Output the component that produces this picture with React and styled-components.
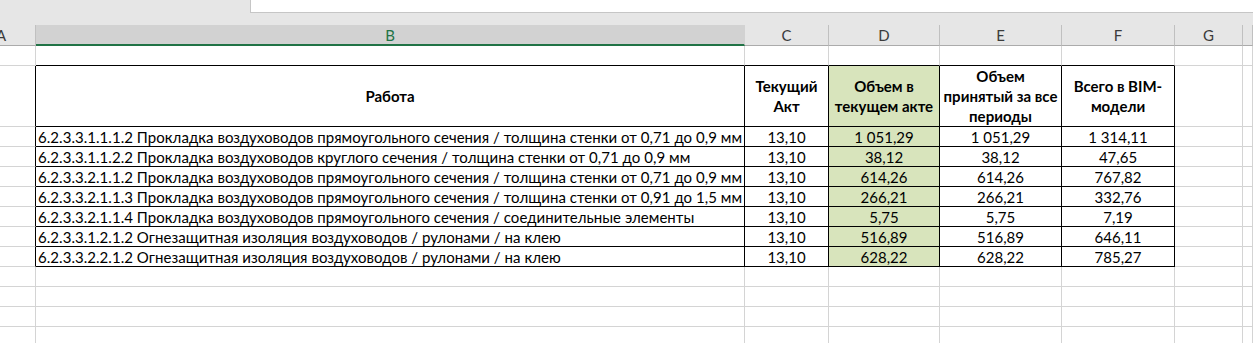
import React from "react";
import styled, { createGlobalStyle } from "styled-components";

const GlobalStyle = createGlobalStyle`
  html, body { margin: 0; padding: 0; background: #ffffff; }
  body {
    font-family: Lato, "Open Sans", "Noto Sans", sans-serif;
    font-size: 15px;
    color: #000;
    overflow: hidden;
  }
`;

const COLS = "36px 709px 84px 111px 122px 113px 68px 1fr";

const Page = styled.div`
  width: 1253px;
  height: 343px;
  overflow: hidden;
`;

const TopBar = styled.div`
  height: 25px;
  background: #e6e6e6;
  display: flex;
`;

const FormulaBox = styled.div`
  margin-left: 250px;
  flex: 1;
  height: 13px;
  box-sizing: border-box;
  background: #ffffff;
  border-left: 1px solid #c6c6c6;
  border-bottom: 1px solid #c6c6c6;
`;

const Row = styled.div`
  display: grid;
  grid-template-columns: ${COLS};
  height: ${(p) => p.$h}px;
`;

const ColHead = styled.div`
  box-sizing: border-box;
  background: ${(p) => (p.$selected ? "#d2d2d2" : "#e6e6e6")};
  border-right: 1px solid ${(p) => (p.$selected ? "#d2d2d2" : "#c0c0c0")};
  border-bottom: ${(p) => (p.$selected ? "2px solid #217346" : "1px solid #ababab")};
  color: ${(p) => (p.$selected ? "#217346" : "#3b3b3b")};
  display: flex;
  align-items: center;
  justify-content: ${(p) => (p.$edge ? "flex-start" : "center")};
  font-size: 15px;
  line-height: 20px;
  padding-top: ${(p) => (p.$selected ? "1px" : "0")};
  overflow: hidden;
`;

const EdgeLetter = styled.span`
  margin-left: -4px;
`;

const Cell = styled.div`
  box-sizing: border-box;
  background: ${(p) => p.$bg || "#ffffff"};
  border-right: 1px solid ${(p) => p.$r || "#d4d4d4"};
  border-bottom: 1px solid ${(p) => p.$b || "#d4d4d4"};
  display: flex;
  align-items: center;
  justify-content: ${(p) => (p.$left ? "flex-start" : "center")};
  text-align: ${(p) => (p.$left ? "left" : "center")};
  padding: ${(p) => (p.$left ? "0 0 0 2px" : "0 2px")};
  font-weight: ${(p) => (p.$bold ? 700 : 400)};
  letter-spacing: ${(p) => (p.$left ? "0.04px" : "0")};
  line-height: 20px;
  white-space: ${(p) => (p.$wrap ? "normal" : "nowrap")};
  overflow: hidden;
`;

const GREEN = "#d8e4bc";
const BLACK = "#000000";

const data = [
  ["6.2.3.3.1.1.1.2 Прокладка воздуховодов прямоугольного сечения / толщина стенки от 0,71 до 0,9 мм", "13,10", "1\u00a0051,29", "1\u00a0051,29", "1\u00a0314,11"],
  ["6.2.3.3.1.1.2.2 Прокладка воздуховодов круглого сечения / толщина стенки от 0,71 до 0,9 мм", "13,10", "38,12", "38,12", "47,65"],
  ["6.2.3.3.2.1.1.2 Прокладка воздуховодов прямоугольного сечения / толщина стенки от 0,71 до 0,9 мм", "13,10", "614,26", "614,26", "767,82"],
  ["6.2.3.3.2.1.1.3 Прокладка воздуховодов прямоугольного сечения / толщина стенки от 0,91 до 1,5 мм", "13,10", "266,21", "266,21", "332,76"],
  ["6.2.3.3.2.1.1.4 Прокладка воздуховодов прямоугольного сечения / соединительные элементы", "13,10", "5,75", "5,75", "7,19"],
  ["6.2.3.3.1.2.1.2 Огнезащитная изоляция воздуховодов / рулонами / на клею", "13,10", "516,89", "516,89", "646,11"],
  ["6.2.3.3.2.2.1.2 Огнезащитная изоляция воздуховодов / рулонами / на клею", "13,10", "628,22", "628,22", "785,27"],
];

const EmptyRow = ({ h = 20, tableTop = false }) => (
  <Row $h={h}>
    <Cell />
    <Cell $b={tableTop ? BLACK : undefined} />
    <Cell $b={tableTop ? BLACK : undefined} />
    <Cell $b={tableTop ? BLACK : undefined} />
    <Cell $b={tableTop ? BLACK : undefined} />
    <Cell $b={tableTop ? BLACK : undefined} />
    <Cell />
    <Cell />
  </Row>
);

export default function App() {
  return (
    <Page>
      <GlobalStyle />
      <TopBar>
        <FormulaBox />
      </TopBar>
      <Row $h={21}>
        <ColHead $edge>
          <EdgeLetter>A</EdgeLetter>
        </ColHead>
        <ColHead $selected>B</ColHead>
        <ColHead>C</ColHead>
        <ColHead>D</ColHead>
        <ColHead>E</ColHead>
        <ColHead>F</ColHead>
        <ColHead>G</ColHead>
        <ColHead />
      </Row>
      <EmptyRow tableTop />
      <Row $h={61}>
        <Cell $r={BLACK} />
        <Cell $r={BLACK} $b={BLACK} $bold>Работа</Cell>
        <Cell $r={BLACK} $b={BLACK} $bold $wrap>Текущий Акт</Cell>
        <Cell $r={BLACK} $b={BLACK} $bold $wrap $bg={GREEN}>Объем в текущем акте</Cell>
        <Cell $r={BLACK} $b={BLACK} $bold $wrap>Объем принятый за все периоды</Cell>
        <Cell $r={BLACK} $b={BLACK} $bold $wrap>Всего в BIM-модели</Cell>
        <Cell />
        <Cell />
      </Row>
      {data.map((r, i) => (
        <Row $h={20} key={i}>
          <Cell $r={BLACK} />
          <Cell $r={BLACK} $b={BLACK} $left>{r[0]}</Cell>
          <Cell $r={BLACK} $b={BLACK}>{r[1]}</Cell>
          <Cell $r={BLACK} $b={BLACK} $bg={GREEN}>{r[2]}</Cell>
          <Cell $r={BLACK} $b={BLACK}>{r[3]}</Cell>
          <Cell $r={BLACK} $b={BLACK}>{r[4]}</Cell>
          <Cell />
          <Cell />
        </Row>
      ))}
      <EmptyRow />
      <EmptyRow />
      <EmptyRow />
      <EmptyRow />
    </Page>
  );
}
